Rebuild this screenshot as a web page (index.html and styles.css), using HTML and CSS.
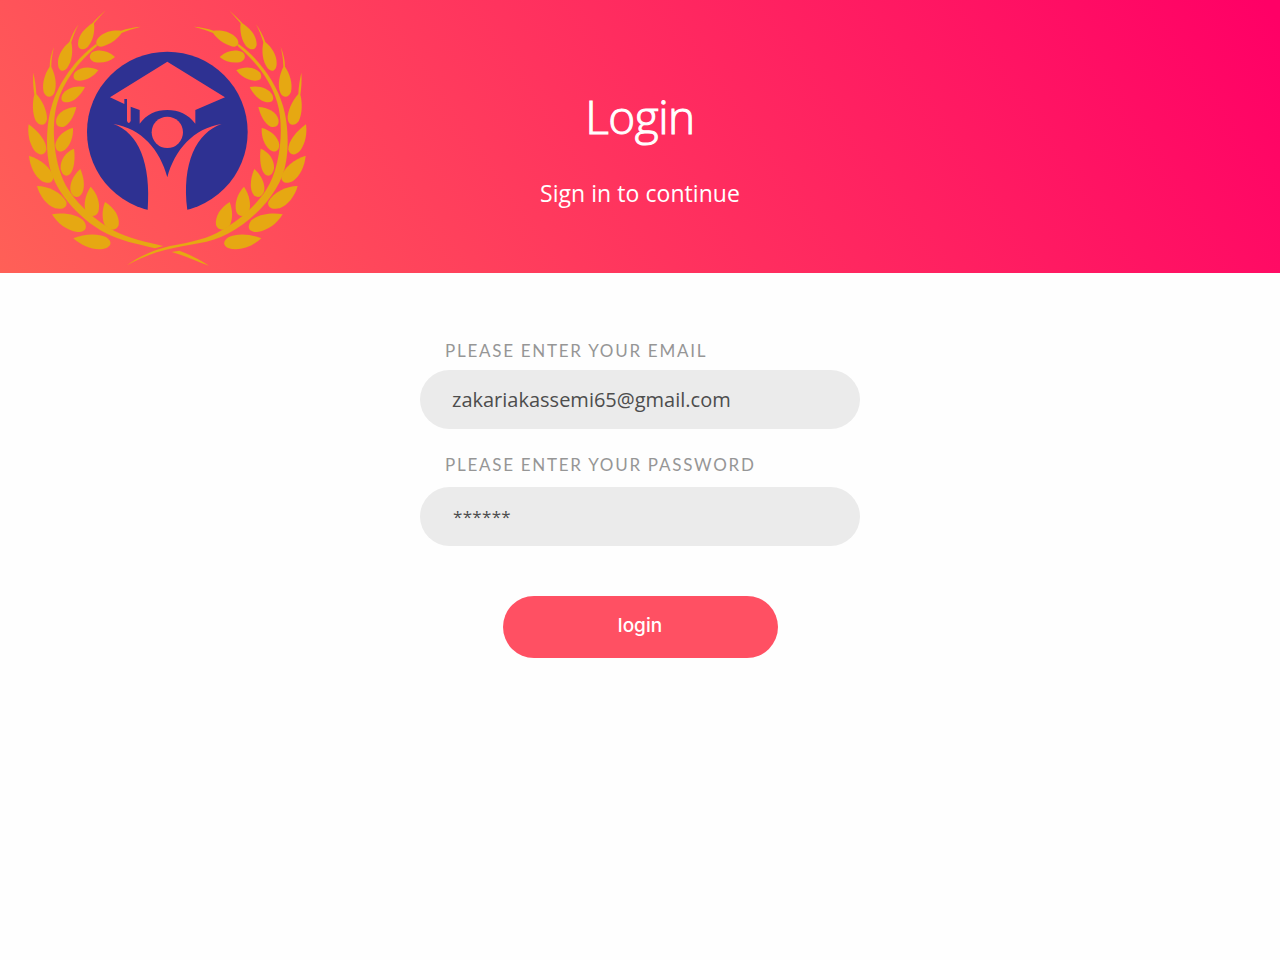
FILE: index.html
```
<!DOCTYPE html>
<html lang="en">
<head>
<meta charset="utf-8">
<title>Login</title>
<link rel="stylesheet" href="styles.css">
</head>
<body>
<header class="banner">
  <svg class="logo" viewBox="0 0 885 810" aria-label="Graduation emblem">
    <defs>
      <g id="leaves">
        <path d="M257 31L222 70C226 100 216 128 203 141C189 154 174 148 174 132C175 104 196 84 217 70C230 56 243 44 257 31Z"/>
        <path d="M362 80C335 88 320 92 305 99C290 122 258 140 240 140C224 138 226 120 240 109C256 94 280 90 303 92C322 86 340 81 362 80Z"/>
        <path d="M176 73C166 92 160 108 154 127C160 155 156 185 141 205C130 218 115 214 114 192C112 168 128 142 148 126C154 108 164 90 176 73Z"/>
        <path d="M102 141C97 162 94 180 94 200C106 225 112 255 103 278C96 294 78 295 71 276C65 250 75 220 89 200C89 180 94 160 102 141Z"/>
        <path d="M40 218C45 240 48 260 49 282C68 303 82 335 81 357C78 378 60 380 48 364C36 340 37 305 43 284C40 265 38 240 40 218Z"/>
        <path d="M26 373C55 393 80 425 79 448C76 468 56 468 42 450C28 430 22 400 26 373Z"/>
        <path d="M27 467C60 476 95 505 100 530C100 550 82 553 64 542C45 528 30 500 27 467Z"/>
        <path d="M51 558C85 558 125 578 139 605C143 622 128 630 105 625C80 615 60 590 51 558Z"/>
        <path d="M96 643C130 637 175 643 193 665C204 685 195 696 172 696C140 692 112 670 96 643Z"/>
        <path d="M160 715C190 702 232 698 259 712C276 724 275 736 260 744C230 755 190 742 160 715Z"/>
        <path d="M285 171C262 150 235 147 216 157C205 167 208 180 222 186C245 191 268 185 285 171Z"/>
        <path d="M235 211C210 197 180 201 165 217C156 230 160 243 180 242C205 240 222 228 235 211Z"/>
        <path d="M195 261C165 255 138 266 127 284C120 300 127 310 148 306C170 300 185 280 195 261Z"/>
        <path d="M169 321C140 322 115 337 109 357C105 375 115 384 132 380C152 370 163 345 169 321Z"/>
        <path d="M159 384C135 388 108 412 106 434C106 453 120 460 135 449C152 435 160 410 159 384Z"/>
        <path d="M162 446C138 455 120 480 122 505C125 525 138 533 150 522C163 508 166 475 162 446Z"/>
        <path d="M181 507C158 527 147 555 152 575C160 595 178 596 187 578C196 558 191 530 181 507Z"/>
        <path d="M212 560C195 585 190 615 197 635C208 652 228 653 235 635C242 612 232 580 212 560Z"/>
        <path d="M255 606C246 630 245 655 254 675C268 694 290 693 296 675C300 650 282 622 255 606Z"/>
      </g>
      <mask id="figure">
        <rect width="885" height="810" fill="#fff"/>
        <g transform="translate(180 135)" fill="#000">
          <path d="M262 50L435 157L346 195V236C325 208 295 195 262 195C228 195 200 208 179 236V195L152 185V228Q146 240 141 228V162H133V177L90 157Z"/>
          <circle cx="262" cy="262" r="47"/>
          <path d="M100 237C185 250 240 315 262 397C284 315 340 250 425 237C350 262 304 355 322 495V520H203V495C214 355 175 262 100 237Z"/>
        </g>
      </mask>
    </defs>
    <g class="laurel">
      <use href="#leaves"/>
      <use href="#leaves" transform="translate(884 0) scale(-1 1)"/>
      <path d="M228 132C165 178 115 250 96 315C80 365 77 435 86 485C97 565 170 652 258 700C300 722 350 732 405 745L430 738C380 726 325 716 278 690C230 663 178 620 146 570C100 500 92 375 112 308C130 245 175 185 232 137Z"/>
      <path d="M656 132C719 178 769 250 788 315C804 365 807 435 798 485C787 565 714 652 626 700C570 732 505 732 435 750C400 758 360 775 321 796C355 770 400 750 450 738C520 725 565 716 606 690C654 663 706 620 738 570C784 500 792 375 772 308C754 245 709 185 652 137Z"/>
      <path d="M455 756L478 752C510 763 540 780 567 797C530 785 500 768 455 756Z"/>
    </g>
    <circle class="disc" cx="442" cy="396" r="241" mask="url(#figure)"/>
  </svg>
  <div class="heading">
    <h1 class="title">Login</h1>
    <p class="subtitle">Sign in to continue</p>
  </div>
</header>
<main>
  <form class="form">
    <label class="label" for="email">PLEASE ENTER YOUR EMAIL</label>
    <input class="field email" id="email" type="text" value="zakariakassemi65@gmail.com">
    <label class="label second" for="password">PLEASE ENTER YOUR PASSWORD</label>
    <input class="field password" id="password" type="text" value="******">
    <button class="submit" type="button">login</button>
  </form>
</main>
</body>
</html>
```
FILE: styles.css
```
* { box-sizing: border-box; }
body {
  margin: 0;
  min-height: 960px;
  background: #fefefe;
  font-family: "Open Sans", "Noto Sans", sans-serif;
}
.banner {
  display: grid;
  grid-template-columns: 320px 640px 320px;
  height: 273px;
  background: linear-gradient(56deg, #ff6057 0%, #ff0066 99%);
}
.logo {
  width: 295px;
  height: 270px;
  margin-left: 20px;
}
.laurel { fill: #e6a812; }
.disc { fill: #2e3192; }
.heading {
  padding-top: 84px;
  color: #fff;
  text-align: center;
}
.title {
  margin: 0;
  font-size: 46px;
  font-weight: 300;
  line-height: 64px;
  letter-spacing: -0.5px;
  -webkit-text-stroke: 1px #fff;
}
.subtitle {
  margin: 28px 0 0;
  font-size: 23px;
  line-height: 34px;
  letter-spacing: 0.05px;
}
.form {
  display: flex;
  flex-direction: column;
  width: 440px;
  margin: 0 auto;
  padding-top: 66px;
}
.label {
  height: 24px;
  margin-bottom: 7px;
  padding-left: 25px;
  color: #969696;
  font-family: Lato, sans-serif;
  font-size: 17px;
  line-height: 24px;
  letter-spacing: 1.73px;
  white-space: nowrap;
}
.label.second {
  margin-top: 24px;
  margin-bottom: 10px;
}
.field {
  width: 440px;
  height: 59px;
  padding: 0 32px;
  border: 0;
  border-radius: 30px;
  background: #ebebeb;
  color: #4d4d4d;
  font-family: "Open Sans", sans-serif;
  font-size: 20px;
}
.password {
  padding: 0 33px 1px;
  font-size: 17px;
  letter-spacing: 0.3px;
}
.submit {
  width: 275px;
  height: 62px;
  margin: 50px auto 0;
  padding: 0 0 4px;
  border: 0;
  border-radius: 31px;
  background: #ff5063;
  color: #fff;
  font: 500 19px Inter, sans-serif;
}
```
